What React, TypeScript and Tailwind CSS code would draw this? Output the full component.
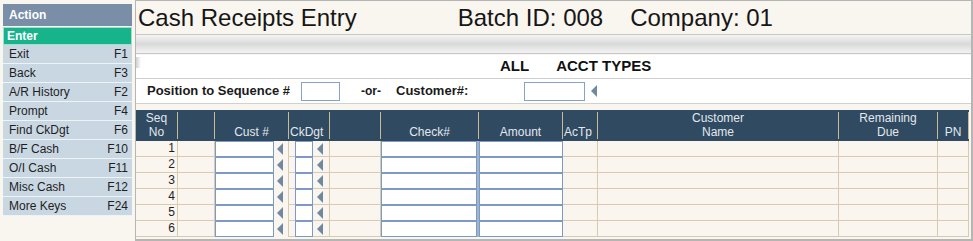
import React from 'react';

const menu = [
  { label: 'Exit', key: 'F1' },
  { label: 'Back', key: 'F3' },
  { label: 'A/R History', key: 'F2' },
  { label: 'Prompt', key: 'F4' },
  { label: 'Find CkDgt', key: 'F6' },
  { label: 'B/F Cash', key: 'F10' },
  { label: 'O/I Cash', key: 'F11' },
  { label: 'Misc Cash', key: 'F12' },
  { label: 'More Keys', key: 'F24' },
];

const rows = [1, 2, 3, 4, 5, 6];

function Arrow() {
  return (
    <svg width="6" height="12" viewBox="0 0 6 12" className="shrink-0">
      <polygon points="6,0 6,12 0,6" fill="#6f8aa0" />
    </svg>
  );
}

function Sidebar() {
  return (
    <div className="w-[135px] shrink-0 pl-[3px] pr-[3px] pt-[4px]">
      <div className="h-[22px] bg-[#7a8ea8] text-white font-bold text-[12px] pl-[6px] flex items-center">Action</div>
      <div className="mt-[1px] h-[18px] bg-[#17b48b] border border-[#9fe0cc] text-white font-bold text-[12px] pl-[3px] flex items-center">
        Enter
      </div>
      {menu.map((m) => (
        <div
          key={m.label}
          className="h-[19px] bg-[#c9d7e3] border-b border-[#eef3f7] text-[#1e1e1e] text-[12px] pl-[6px] pr-[4px] flex items-center justify-between"
        >
          <span>{m.label}</span>
          <span>{m.key}</span>
        </div>
      ))}
    </div>
  );
}

function HeaderCell({ w, top, bottom, align = 'center' }: { w: string; top?: string; bottom?: string; align?: string }) {
  return (
    <div
      className={`${w} shrink-0 border-r border-[#c9bc94] flex flex-col justify-between leading-[13px] text-[12px] text-[#e2e8ee] ${
        align === 'left' ? 'items-start pl-[1px]' : 'items-center'
      }`}
    >
      <span>{top ?? '\u00a0'}</span>
      <span>{bottom ?? '\u00a0'}</span>
    </div>
  );
}

function Table() {
  return (
    <div className="mt-[6px] mr-[2px]">
      <div className="flex h-[31px] bg-[#2f4a61] py-[2px]">
        <HeaderCell w="w-[42px]" top="Seq" bottom="No" />
        <HeaderCell w="w-[37px]" />
        <HeaderCell w="w-[74px]" bottom="Cust #" />
        <HeaderCell w="w-[41px]" bottom="CkDgt" align="left" />
        <HeaderCell w="w-[51px]" />
        <HeaderCell w="w-[98px]" bottom="Check#" />
        <HeaderCell w="w-[84px]" bottom="Amount" />
        <HeaderCell w="w-[35px]" bottom="AcTp" align="left" />
        <HeaderCell w="w-[241px]" top="Customer" bottom="Name" />
        <HeaderCell w="w-[99px]" top="Remaining" bottom="Due" />
        <HeaderCell w="w-[31px]" bottom="PN" />
      </div>
      {rows.map((n) => (
        <div key={n} className="flex h-[16px] bg-[#faf6ef] text-[12px] text-[#1e1e1e]">
          <div className="w-[42px] shrink-0 border-r border-b border-[#d6cbb0] text-right pr-[2px] leading-[15px]">{n}</div>
          <div className="w-[37px] shrink-0 border-r border-b border-[#d6cbb0]" />
          <div className="w-[74px] shrink-0 flex items-center">
            <div className="w-[59px] h-[16px] bg-white border border-[#7b9bc4]" />
            <div className="ml-[3px]">
              <Arrow />
            </div>
            <div className="ml-auto h-[16px] border-r border-[#d6cbb0]" />
          </div>
          <div className="w-[41px] shrink-0 flex items-center border-r border-b border-[#d6cbb0]">
            <div className="ml-[6px] w-[18px] h-[16px] bg-white border border-[#7b9bc4]" />
            <div className="ml-[4px]">
              <Arrow />
            </div>
          </div>
          <div className="w-[51px] shrink-0 border-r border-b border-[#d6cbb0]" />
          <div className="w-[98px] shrink-0 flex">
            <div className="w-[96px] h-[16px] bg-white border border-[#7b9bc4]" />
            <div className="w-[2px] bg-[#9fb4cf]" />
          </div>
          <div className="w-[84px] shrink-0 h-[16px] bg-white border border-[#7b9bc4]" />
          <div className="w-[35px] shrink-0 border-r border-b border-[#d6cbb0]" />
          <div className="w-[241px] shrink-0 border-r border-b border-[#d6cbb0]" />
          <div className="w-[99px] shrink-0 border-r border-b border-[#d6cbb0]" />
          <div className="w-[31px] shrink-0 border-r border-b border-[#d6cbb0]" />
          <div className="flex-1 border-b border-[#d6cbb0]" />
        </div>
      ))}
    </div>
  );
}

export default function App() {
  return (
    <div className="flex w-[973px] h-[241px] bg-[#f9f5ef] font-['Liberation_Sans',Arial,sans-serif] overflow-hidden">
      <Sidebar />
      <div className="flex-1 flex flex-col border-l border-t border-[#b5b5b5] border-r-2 border-b-2">
        <div className="h-[33px] flex items-center text-[24px] text-[#161616] pl-[2px]">
          <span>Cash Receipts Entry</span>
          <span className="ml-[101px]">Batch ID: 008</span>
          <span className="ml-[27px]">Company: 01</span>
        </div>
        <div className="h-[20px] border-y border-[#c6c6c6] bg-gradient-to-b from-[#f4f4f4] via-[#d9d9d9] to-[#f3f3f3]" />
        <div className="relative mt-[1px] bg-white border-b border-[#d0d0d0]">
          <div className="absolute left-0 top-[2px] w-[5px] h-[11px] bg-gradient-to-r from-[#d0d0d0] to-white" />
          <div className="h-[24px] flex items-center border-b border-[#cfcfcf] font-bold text-[15px] text-[#111]">
            <span className="ml-[364px]">ALL</span>
            <span className="ml-[27px]">ACCT TYPES</span>
          </div>
          <div className="h-[24px] flex items-center font-bold text-[13px] text-[#1a1a1a]">
            <span className="ml-[11px]">Position to Sequence #</span>
            <div className="ml-[11px] w-[39px] h-[19px] border border-[#86a2cb] bg-white" />
            <span className="ml-[21px] text-[12px]">-or-</span>
            <span className="ml-[15px]">Customer#:</span>
            <div className="ml-[56px] w-[61px] h-[19px] border border-[#86a2cb] bg-white" />
            <div className="ml-[6px]">
              <Arrow />
            </div>
          </div>
        </div>
        <Table />
      </div>
    </div>
  );
}
